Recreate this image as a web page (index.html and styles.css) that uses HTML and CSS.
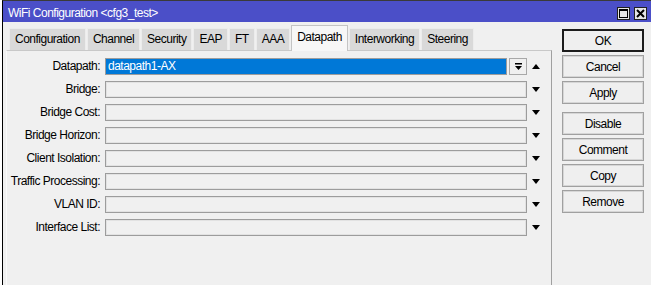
FILE: index.html
```html
<!DOCTYPE html>
<html lang="en">
<head>
  <meta charset="UTF-8" />
  <title>WiFi Configuration</title>
  <link rel="stylesheet" href="styles.css">
</head>
<body>
<div class="window">
  <div class="titlebar">
    <span class="title">WiFi Configuration &lt;cfg3_test&gt;</span>
    <div class="title-btns">
      <span class="tbtn">
        <svg width="9" height="9" viewBox="0 0 9 9"><rect x="0.5" y="0.5" width="8" height="8" fill="none" stroke="#000"/><rect x="0" y="0" width="9" height="2" fill="#000"/></svg>
      </span>
      <span class="tbtn">
        <svg width="9" height="9" viewBox="0 0 9 9"><path d="M1 1 L8 8 M8 1 L1 8" stroke="#000" stroke-width="2"/></svg>
      </span>
    </div>
  </div>

  <div class="main">
    <div class="left">
      <div class="tabs">
        <span class="tab">Configuration</span>
        <span class="tab">Channel</span>
        <span class="tab">Security</span>
        <span class="tab">EAP</span>
        <span class="tab">FT</span>
        <span class="tab">AAA</span>
        <span class="tab active">Datapath</span>
        <span class="tab">Interworking</span>
        <span class="tab">Steering</span>
      </div>

      <div class="panel">
        <div class="form">
          <label>Datapath:</label>
          <div class="combo">
            <div class="combo-value">datapath1-AX</div>
            <div class="combo-btn">
              <svg width="7" height="8" viewBox="0 0 7 8"><rect x="0" y="0" width="7" height="1.5" fill="#000"/><polygon points="0,3 7,3 3.5,7" fill="#000"/></svg>
            </div>
          </div>
          <span class="arrow up"></span>

          <label>Bridge:</label>
          <div class="field"></div>
          <span class="arrow"></span>

          <label>Bridge Cost:</label>
          <div class="field"></div>
          <span class="arrow"></span>

          <label>Bridge Horizon:</label>
          <div class="field"></div>
          <span class="arrow"></span>

          <label>Client Isolation:</label>
          <div class="field"></div>
          <span class="arrow"></span>

          <label>Traffic Processing:</label>
          <div class="field"></div>
          <span class="arrow"></span>

          <label>VLAN ID:</label>
          <div class="field"></div>
          <span class="arrow"></span>

          <label>Interface List:</label>
          <div class="field"></div>
          <span class="arrow"></span>
        </div>
      </div>
    </div>

    <div class="actions">
      <button class="btn default">OK</button>
      <button class="btn">Cancel</button>
      <button class="btn">Apply</button>
      <button class="btn spaced">Disable</button>
      <button class="btn">Comment</button>
      <button class="btn">Copy</button>
      <button class="btn">Remove</button>
    </div>
  </div>
</div>
</body>
</html>
```

FILE: styles.css
```css
body {
  margin: 0;
  background-color: #ffffff;
  font-family: "Liberation Sans", Arial, sans-serif;
  font-size: 12px;
  letter-spacing: -0.5px;
  color: #000000;
  overflow: hidden;
}

.window {
  margin-left: 2px;
  height: 284px;
  border-left: 1px solid #000000;
  border-top: 1px solid #3a3a3a;
  background-color: #f0f0f0;
  display: flex;
  flex-direction: column;
}

/* title bar */
.titlebar {
  height: 21px;
  box-sizing: border-box;
  padding: 5px 4px 0 5px;
  background-color: #4b4fc8;
  color: #ffffff;
  display: flex;
}

.title {
  flex: 1;
  line-height: 14px;
}

.title-btns {
  display: flex;
  gap: 4px;
  margin-top: 1px;
}

.tbtn {
  width: 13px;
  height: 13px;
  box-sizing: border-box;
  border: 1px solid #202020;
  background-color: #e6e6e6;
  display: flex;
  align-items: center;
  justify-content: center;
}

/* body */
.main {
  flex: 1;
  display: flex;
  min-height: 0;
}

.left {
  margin-left: 3px;
  width: 546px;
  display: flex;
  flex-direction: column;
}

.tabs {
  height: 25px;
  margin-top: 3px;
  padding-left: 3px;
  display: flex;
  align-items: flex-end;
  gap: 1px;
}

.tab {
  height: 22px;
  line-height: 21px;
  padding: 0 5px;
  box-sizing: border-box;
  background-color: #d9d9d9;
  border: 1px solid #ececec;
  border-bottom: none;
}

.tab.active {
  height: 26px;
  line-height: 23px;
  margin-bottom: -1px;
  background-color: #f7f7f7;
  border-color: #c4c4c4;
  position: relative;
  z-index: 1;
}

.panel {
  flex: 1;
  padding-top: 7px;
  border-top: 1px solid #c8c8c8;
  border-left: 1px solid #fafafa;
  border-right: 1px solid #a0a0a0;
}

.form {
  display: grid;
  grid-template-columns: 98px 422px 24px;
  grid-auto-rows: 17px;
  row-gap: 6px;
  align-items: center;
}

.form label {
  text-align: right;
  padding-right: 5px;
  line-height: 17px;
  white-space: nowrap;
}

.field {
  height: 17px;
  box-sizing: border-box;
  border: 1px solid #9c9c9c;
  box-shadow: inset 0 0 0 1px #e2e2e2;
}

.combo {
  height: 17px;
  display: flex;
  gap: 2px;
}

.combo-value {
  flex: 1;
  box-sizing: border-box;
  border: 1px solid #9c9c9c;
  background-color: #0078d7;
  color: #ffffff;
  padding-left: 2px;
  line-height: 15px;
}

.combo-btn {
  width: 18px;
  box-sizing: border-box;
  border: 1px solid #a8a8a8;
  display: flex;
  align-items: center;
  justify-content: center;
}

.arrow {
  width: 0;
  height: 0;
  margin-left: 5px;
  border-left: 4.5px solid transparent;
  border-right: 4.5px solid transparent;
  border-top: 5px solid #000000;
}

.arrow.up {
  border-top: none;
  border-bottom: 5px solid #000000;
}

/* right column buttons */
.actions {
  width: 82px;
  margin-left: 10px;
  margin-top: 7px;
  display: flex;
  flex-direction: column;
  gap: 3px;
}

.btn {
  height: 23px;
  padding: 0;
  box-sizing: border-box;
  font-family: inherit;
  font-size: 12px;
  letter-spacing: -0.5px;
  color: #000000;
  background-color: #efefef;
  border: 1px solid #a0a0a0;
  box-shadow: inset 0 0 0 1px #d6d6d6;
}

.btn.default {
  border: 2px solid #1c1c1c;
  box-shadow: none;
}

.btn.spaced {
  margin-top: 5px;
}
```
